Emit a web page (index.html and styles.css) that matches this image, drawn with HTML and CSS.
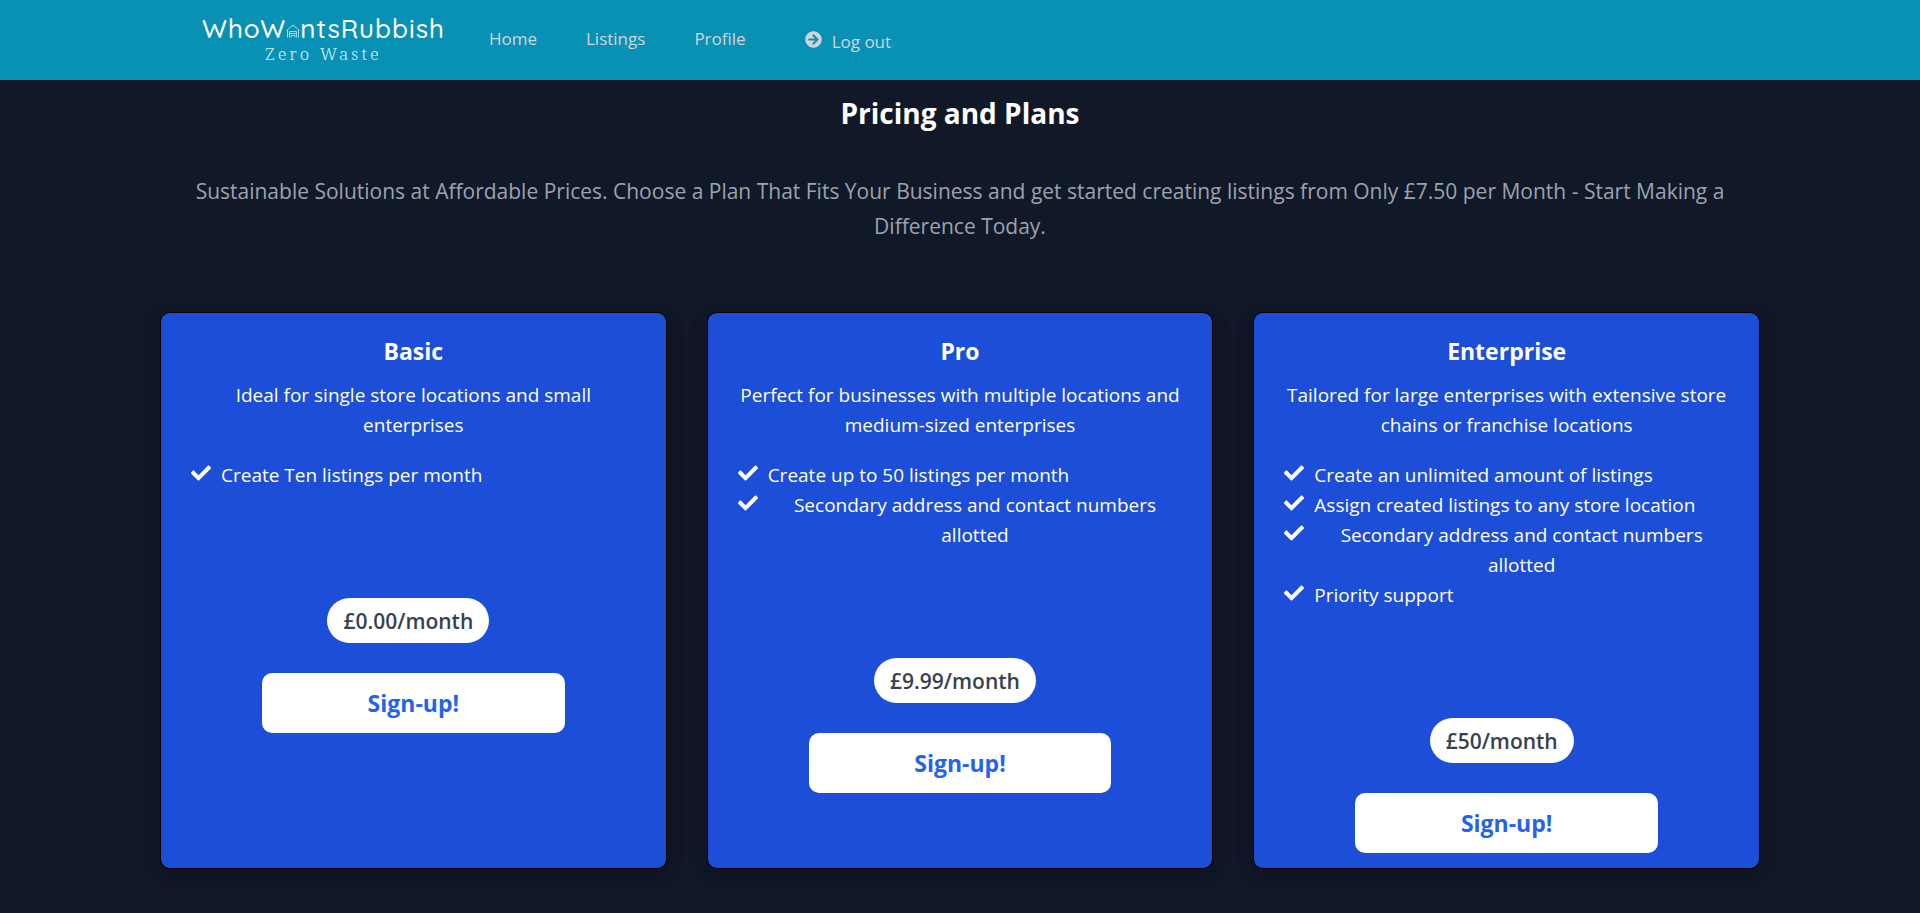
FILE: index.html
```html
<!DOCTYPE html>
<html lang="en">
<head>
<meta charset="utf-8">
<meta name="viewport" content="width=device-width, initial-scale=1">
<title>Pricing and Plans</title>
<link rel="stylesheet" href="styles.css">
</head>
<body>
<svg class="sprite" aria-hidden="true">
  <symbol id="check" viewBox="0 0 512 512"><path fill="currentColor" d="M173.900 439.400l-166.400-166.400c-10-10-10-26.200 0-36.200l36.200-36.200c10-10 26.200-10 36.200 0L192 312.700 432.100 72.600c10-10 26.200-10 36.200 0l36.200 36.200c10 10 10 26.200 0 36.200l-294.400 294.400c-10 10-26.200 10-36.200 0z"/></symbol>
</svg>
<header class="navbar">
  <a class="brand" href="#">
    <span class="brand-name">WhoW<svg class="brand-house" viewBox="0 0 14 14" aria-hidden="true"><path d="M.5 6.500 7 1l6.500 5.500M1.500 6v7.500M12.500 6v7.500M3.500 13.500v-6h7v6M3.500 9.500h7M5 13.500v-2h4v2" fill="none" stroke="currentColor" stroke-width=".8"/></svg>ntsRubbish</span>
    <span class="brand-tag">Zero Waste</span>
  </a>
  <nav class="links">
    <a href="#">Home</a>
    <a href="#">Listings</a>
    <a href="#">Profile</a>
    <a class="logout" href="#"><svg class="logout-icon" viewBox="0 0 512 512" aria-hidden="true"><path fill="currentColor" d="M256 8c137 0 248 111 248 248S393 504 256 504 8 393 8 256 119 8 256 8zm-28.900 143.600l75.500 72.400H120c-13.300 0-24 10.700-24 24v16c0 13.300 10.700 24 24 24h182.600l-75.500 72.400c-9.700 9.300-9.900 24.800-.4 34.300l11 10.900c9.400 9.400 24.600 9.400 33.900 0L404.300 273c9.400-9.400 9.400-24.600 0-33.900L271.600 106.300c-9.400-9.400-24.600-9.400-33.900 0l-11 10.900c-9.500 9.600-9.300 25.100.4 34.400z"/></svg><span>Log out</span></a>
  </nav>
</header>
<main class="pricing">
  <h1>Pricing and Plans</h1>
  <p class="lead">Sustainable Solutions at Affordable Prices. Choose a Plan That Fits Your Business and get started creating listings from Only £7.50 per Month - Start Making a Difference Today.</p>
  <div class="plans">
    <section class="plan">
      <h2>Basic</h2>
      <p class="summary">Ideal for single store locations and small enterprises</p>
      <ul class="features">
        <li><svg class="check" aria-hidden="true"><use href="#check"/></svg><span>Create Ten listings per month</span></li>
      </ul>
      <p class="price"><span>£0.00/month</span></p>
      <button class="signup" type="button">Sign-up!</button>
    </section>
    <section class="plan">
      <h2>Pro</h2>
      <p class="summary">Perfect for businesses with multiple locations and medium-sized enterprises</p>
      <ul class="features">
        <li><svg class="check" aria-hidden="true"><use href="#check"/></svg><span>Create up to 50 listings per month</span></li>
        <li><svg class="check" aria-hidden="true"><use href="#check"/></svg><span>Secondary address and contact numbers allotted</span></li>
      </ul>
      <p class="price"><span>£9.99/month</span></p>
      <button class="signup" type="button">Sign-up!</button>
    </section>
    <section class="plan">
      <h2>Enterprise</h2>
      <p class="summary">Tailored for large enterprises with extensive store chains or franchise locations</p>
      <ul class="features">
        <li><svg class="check" aria-hidden="true"><use href="#check"/></svg><span>Create an unlimited amount of listings</span></li>
        <li><svg class="check" aria-hidden="true"><use href="#check"/></svg><span>Assign created listings to any store location</span></li>
        <li><svg class="check" aria-hidden="true"><use href="#check"/></svg><span>Secondary address and contact numbers allotted</span></li>
        <li><svg class="check" aria-hidden="true"><use href="#check"/></svg><span>Priority support</span></li>
      </ul>
      <p class="price"><span>£50/month</span></p>
      <button class="signup" type="button">Sign-up!</button>
    </section>
  </div>
</main>
</body>
</html>
```

FILE: styles.css
```css
* { box-sizing: border-box; }
body {
  margin: 0;
  min-height: 100vh;
  background: #111827;
  color: #fff;
  font-family: "Segoe UI", "Open Sans", "Noto Sans", sans-serif;
  font-size: 19px;
  line-height: 30px;
}
h1, h2, p, ul { margin: 0; padding: 0; }
.sprite { display: none; }

.navbar {
  display: flex;
  align-items: center;
  gap: 44px;
  min-height: 80px;
  padding: 0 202px;
  background: #0891b5;
}
.brand {
  display: flex;
  flex-direction: column;
  align-items: center;
  color: #fff;
  text-decoration: none;
}
.brand-name {
  font-family: Quicksand, Lato, sans-serif;
  font-size: 26px;
  font-weight: 500;
  line-height: 28px;
  letter-spacing: 1px;
}
.brand-house { width: 14px; height: 14px; opacity: .8; }
.brand-tag {
  font-family: "Noto Serif", "DejaVu Serif", serif;
  font-weight: 300;
  font-size: 17px;
  line-height: 22px;
  letter-spacing: 3px;
  color: #d5eef5;
}
.links { display: flex; align-items: center; gap: 49px; padding-bottom: 2px; font-size: 17px; }
.links a { color: #d1d5db; text-decoration: none; }
.links .logout { display: flex; align-items: center; gap: 10px; margin-left: 10px; }
.logout-icon { width: 17px; height: 17px; }
.logout span { padding-top: 5px; }

.pricing { max-width: 1600px; margin: 0 auto; padding: 11px 0 40px; text-align: center; }
h1 { font-size: 28px; line-height: 45px; font-weight: 700; }
.lead { margin-top: 38px; color: #9ca3af; font-size: 21px; line-height: 35px; }
.plans { display: grid; grid-template-columns: repeat(3, 1fr); gap: 40px; margin-top: 68px; }
.plan {
  display: flex;
  flex-direction: column;
  padding: 20px 0 15px;
  background: #1d4ed8;
  border: 1px solid #000;
  border-radius: 10px;
  box-shadow: 0 10px 20px rgba(0, 0, 0, .15), 0 0 20px rgba(0, 0, 0, .1);
}
h2 { font-size: 23px; line-height: 37px; font-weight: 700; }
.summary { margin-top: 10px; padding: 0 30px; }
.features { margin: 20px 0 0; padding: 0 30px; list-style: none; }
.features li { display: flex; align-items: flex-start; gap: 10px; }
.check { flex: none; width: 20px; height: 20px; margin-top: 3px; }
.price { margin-top: 108px; padding-right: 10px; }
.price span {
  display: inline-block;
  padding: 9px 16px 7px;
  border-radius: 23px;
  background: #fff;
  color: #374151;
  font-size: 21px;
  line-height: 29px;
  font-weight: 600;
  vertical-align: top;
}
.signup {
  align-self: center;
  width: 60%;
  margin-top: 30px;
  padding: 15px;
  border: 0;
  border-radius: 10px;
  background: #fff;
  color: #2563eb;
  font: 700 23px/30px "Segoe UI", "Open Sans", "Noto Sans", sans-serif;
}
```
